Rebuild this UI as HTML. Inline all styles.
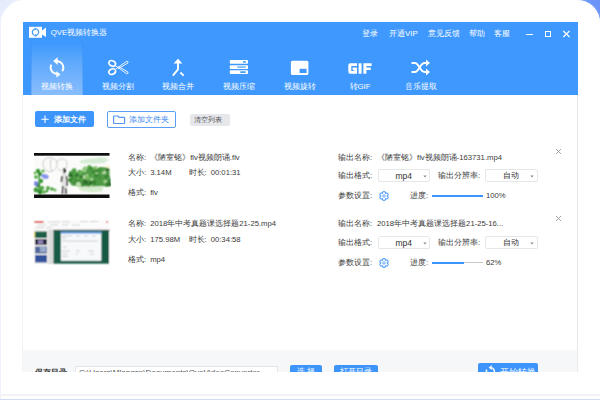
<!DOCTYPE html>
<html><head><meta charset="utf-8">
<style>
*{margin:0;padding:0;box-sizing:border-box}
html,body{width:600px;height:400px;overflow:hidden;background:#fff;font-family:"Liberation Sans",sans-serif}
.a{position:absolute}
#bg{left:0;top:0;width:600px;height:400px;background:radial-gradient(circle at 0 0,#e2e9fb 0px,#ebf0fc 16px,#f6f8fe 30px,#ffffff 60px)}
#blob{left:560px;top:0;width:40px;height:40px;background:#6b94f6}
#card{left:1px;top:0;width:599px;height:395px;background:#fff;border-radius:24px 23px 0 0;box-shadow:0 0 1.5px rgba(255,255,255,1)}
#leftline{left:0;top:20px;width:1px;height:380px;background:#eef2fc}
#botline{left:0;top:394px;width:600px;height:2px;background:#f1f2f4}
#botline2{left:0;top:398.5px;width:600px;height:1.5px;background:#cfdaf4}
#win{left:23px;top:22px;width:555px;height:350px;background:#fff;overflow:hidden}
#rline{left:577px;top:95px;width:1px;height:277px;background:#e8e9ec}
#hdr{left:23px;top:22px;width:555px;height:73px;background:#3e98fe}
#tab{left:31px;top:44px;width:51.5px;height:51px;background:linear-gradient(180deg,#409afd 0%,#5ea9fc 35%,#8abdfc 100%);box-shadow:inset 1px 0 0 rgba(40,120,230,.25),inset -1px 0 0 rgba(40,120,230,.25)}
.t{position:absolute;white-space:nowrap;line-height:1}
.w{color:#fff}
.g{color:#3a3a3a;font-size:7.7px;word-spacing:1.9px}
.lbl{position:absolute;white-space:nowrap;line-height:1;color:#fff;font-size:7.8px;width:60px;text-align:center;top:82.7px}
#footer{left:23px;top:350px;width:554px;height:22px;background:#f6f7f9}
.btn{position:absolute;border-radius:2px}
.sel{position:absolute;border:1px solid #e6e7ea;border-radius:2px;background:#fff;height:12.3px}
.arr{position:absolute;width:4px;height:3px}
</style></head><body>
<div id="bg" class="a"></div>
<div id="blob" class="a"></div>
<div id="card" class="a"></div>
<div id="leftline" class="a"></div>
<div id="botline" class="a"></div>
<div id="botline2" class="a"></div>
<div id="win" class="a"></div>
<div id="hdr" class="a"></div>
<div id="tab" class="a"></div>

<!-- logo -->
<svg class="a" style="left:28px;top:26px" width="20" height="13" viewBox="0 0 20 13">
  <rect x="1" y="0.8" width="13" height="11" fill="#fff"/>
  <polygon points="14,4.5 18,1.5 18,11 14,8.5" fill="#fff"/>
  <path d="M9.10 3.43 A3.2 3.2 0 0 1 8.06 9.35" fill="none" stroke="#4aa0f2" stroke-width="1.3"/><path d="M5.90 8.97 A3.2 3.2 0 0 1 6.94 3.05" fill="none" stroke="#4aa0f2" stroke-width="1.3"/><path d="M5.4 9.6 L8.4 7.9 L8.2 11 Z M9.6 2.8 L6.6 4.5 L6.8 1.4 Z" fill="#4aa0f2"/>
</svg>
<div class="t w" style="left:50.8px;top:28.5px;font-size:7.8px">QVE视频转换器</div>

<div class="t w" style="left:362px;top:30px;font-size:8px">登录</div>
<div class="t w" style="left:389px;top:30px;font-size:8px">开通VIP</div>
<div class="t w" style="left:428px;top:30px;font-size:8px">意见反馈</div>
<div class="t w" style="left:469px;top:30px;font-size:8px">帮助</div>
<div class="t w" style="left:494px;top:30px;font-size:8px">客服</div>
<!-- window controls -->
<div class="a" style="left:526px;top:33.5px;width:7px;height:1.2px;background:#fff"></div>
<div class="a" style="left:544.5px;top:31px;width:6px;height:6px;border:1.1px solid #fff"></div>
<svg class="a" style="left:562px;top:30px" width="9" height="8" viewBox="0 0 9 8"><path d="M1.3 1L7.5 7M7.5 1L1.3 7" stroke="#fff" stroke-width="1.2"/></svg>

<!-- toolbar icons -->
<svg class="a" style="left:40px;top:52px" width="40" height="28" viewBox="0 0 40 28">
  <path d="M17 9.2 A6.3 6.3 0 0 1 22.2 19.1" fill="none" stroke="#fff" stroke-width="1.9"/>
  <path d="M13.2 9.1 L17.6 5.2 L17.6 13 Z" fill="#fff"/>
  <path d="M11.3 12.7 A6.3 6.3 0 0 0 17 21.8" fill="none" stroke="#fff" stroke-width="1.9"/>
  <path d="M20.6 22.4 L16.4 19.2 L16.4 25.4 Z" fill="#fff"/>
</svg>
<svg class="a" style="left:105px;top:57px" width="26" height="21" viewBox="0 0 26 21">
  <ellipse cx="7.2" cy="6.4" rx="3.5" ry="2.6" transform="rotate(25 7.2 6.4)" fill="none" stroke="#fff" stroke-width="1.6"/>
  <ellipse cx="7.2" cy="14.7" rx="3.5" ry="2.6" transform="rotate(-25 7.2 14.7)" fill="none" stroke="#fff" stroke-width="1.6"/>
  <path d="M10.3 12.4 L21.6 4.3 Q23.4 4.1 23 5.9 L13.4 11.6" fill="none" stroke="#fff" stroke-width="0.9" stroke-linejoin="round"/>
  <path d="M10.3 8.6 L21.6 16.7 Q23.4 16.9 23 15.1 L13.4 9.4" fill="none" stroke="#fff" stroke-width="0.9" stroke-linejoin="round"/>
</svg>
<svg class="a" style="left:170px;top:57px" width="16" height="21" viewBox="0 0 16 21">
  <path d="M8 1.8 L12.4 6.5 L3.6 6.5 Z" fill="#fff"/>
  <path d="M8 6 L8 12.3 L2.8 18.6" fill="none" stroke="#fff" stroke-width="1.9"/>
  <path d="M10.4 15.5 L13.7 18.6" fill="none" stroke="#fff" stroke-width="1.9"/>
</svg>
<svg class="a" style="left:228px;top:58px" width="22" height="18" viewBox="0 0 22 18">
  <rect x="1.8" y="2" width="18.2" height="3.8" rx="0.8" fill="#fff"/>
  <rect x="1.8" y="7.2" width="18.2" height="3.8" rx="0.8" fill="#fff"/>
  <rect x="1.8" y="12.2" width="18.2" height="3.8" rx="0.8" fill="#fff"/>
  <rect x="15" y="3" width="3" height="1.8" rx="0.9" fill="#4aa0f0"/>
  <rect x="9" y="8.2" width="9" height="1.8" rx="0.9" fill="#7cbcf4"/>
  <rect x="12" y="13.2" width="6" height="1.8" rx="0.9" fill="#4aa0f0"/>
</svg>
<svg class="a" style="left:289px;top:59px" width="22" height="18" viewBox="0 0 22 18">
  <rect x="1.9" y="1.8" width="17.5" height="14.3" rx="1.5" fill="#fff"/>
  <rect x="10.6" y="9.8" width="7" height="4.2" fill="#3e98fe"/>
</svg>
<svg class="a" style="left:348px;top:63px" width="24" height="11" viewBox="0 0 24 11">
  <path d="M9 0.3 H2.2 Q0.3 0.3 0.3 2.2 V8.8 Q0.3 10.7 2.2 10.7 H9 V4.6 H4.6 V6.9 H5.8 V8.1 H3.3 V2.9 H9 Z" fill="#fff"/>
  <rect x="10.6" y="0.3" width="3" height="10.4" fill="#fff"/>
  <path d="M15.4 0.3 H23.6 V2.9 H18.4 V4.6 H22.8 V7.1 H18.4 V10.7 H15.4 Z" fill="#fff"/>
</svg>
<svg class="a" style="left:410px;top:58px" width="22" height="19" viewBox="0 0 22 19">
  <path d="M1.5 5 L5 5 C9 5 10 14 14.5 14 L17 14" fill="none" stroke="#fff" stroke-width="2"/>
  <path d="M1.5 14 L5 14 C9 14 10 5 14.5 5 L17 5" fill="none" stroke="#fff" stroke-width="2"/>
  <path d="M16 1.5 L20 5 L16 8.5 Z M16 10.5 L20 14 L16 17.5 Z" fill="#fff"/>
</svg>

<div class="lbl" style="left:27px">视频转换</div>
<div class="lbl" style="left:88px">视频分割</div>
<div class="lbl" style="left:148px">视频合并</div>
<div class="lbl" style="left:209px">视频压缩</div>
<div class="lbl" style="left:270px">视频旋转</div>
<div class="lbl" style="left:330px">转GIF</div>
<div class="lbl" style="left:391px">音乐提取</div>

<!-- action buttons -->
<div class="btn" style="left:35px;top:111px;width:59px;height:16.3px;background:#3d95fc"></div>
<svg class="a" style="left:40px;top:114px" width="10" height="10" viewBox="0 0 10 10"><path d="M5 1.6V9M1.3 5.3H8.7" stroke="#fff" stroke-width="1.1"/></svg>
<div class="t w" style="left:54.2px;top:115.8px;font-size:7.6px;font-weight:bold">添加文件</div>

<div class="btn" style="left:107px;top:111px;width:69.2px;height:16.6px;border:1px solid #5b9ef6;background:#fff"></div>
<svg class="a" style="left:112px;top:114px" width="14" height="11" viewBox="0 0 14 11">
  <path d="M2 2 H5.8 L7.2 3.4 H12.2 Q12.6 3.4 12.6 3.8 V9.1 Q12.6 9.5 12.2 9.5 H2 Q1.6 9.5 1.6 9.1 V2.4 Q1.6 2 2 2 Z" fill="none" stroke="#5498f4" stroke-width="1.2" stroke-linejoin="round"/>
</svg>
<div class="t" style="left:129.2px;top:115.8px;font-size:7.6px;color:#3b88f0">添加文件夹</div>

<div class="btn" style="left:190px;top:114px;width:39.5px;height:12.4px;background:#e6e7eb"></div>
<div class="t" style="left:194.3px;top:116.4px;font-size:7.4px;color:#555">清空列表</div>

<!-- row 1 -->
<svg class="a" style="left:33px;top:152px" width="78" height="48" viewBox="33 152 78 48">
  <defs><filter id="bl" x="-10%" y="-10%" width="120%" height="120%"><feConvolveMatrix order="3" kernelMatrix="1 2 1 2 4 2 1 2 1" divisor="16" edgeMode="none"/></filter></defs>
  <rect x="34" y="155.7" width="75.5" height="38.8" fill="#fbfcfa"/>
  <g filter="url(#bl)">
    <path d="M44 160 C48 156 56 157 57 163 C58 169 52 173 47 171 C43 169 42 164 44 160 Z M51 159 C50 163 50 168 52 171" fill="none" stroke="#c8c8c8" stroke-width="1"/>
    <path d="M57 162 C60 157 67 158 67 164 C67 170 61 172 58 169" fill="none" stroke="#cccccc" stroke-width="1"/>
    <path d="M80 161 C86 158 94 159 98 157.5 C103 156.5 107 158 108.5 160 L104 163 C96 163.5 88 164 80 163 Z" fill="#d6ecd4"/>
    <path d="M102 167 L109.5 165.5 L109.5 171 Z" fill="#f6efc8"/>
    <path d="M39 170 C40 176 38 182 40 194.5" fill="none" stroke="#2f8a2c" stroke-width="1.4"/>
    <circle cx="38" cy="171" r="2.2" fill="#3f9a38"/>
    <circle cx="40" cy="174" r="2" fill="#2f8a2c"/>
    <circle cx="36" cy="177" r="1.8" fill="#4aa83e"/>
    <circle cx="41" cy="181" r="2.2" fill="#3f9a38"/>
    <circle cx="38" cy="185" r="2.4" fill="#3c8a36"/>
    <circle cx="42" cy="188" r="2.2" fill="#55aa45"/>
    <circle cx="36" cy="190" r="2.4" fill="#3f9a38"/>
    <circle cx="40" cy="192" r="2.4" fill="#2f8a2c"/>
    <circle cx="44" cy="192" r="1.8" fill="#4aa83e"/>
    <circle cx="35" cy="173" r="1.5" fill="#6abf50"/>
    <circle cx="43" cy="171" r="1.6" fill="#58b048"/>
    <circle cx="48" cy="188" r="2" fill="#5aa84a"/>
    <circle cx="52" cy="189" r="1.8" fill="#4e9e40"/>
    <circle cx="55" cy="190" r="1.5" fill="#6ab558"/>
    <circle cx="47" cy="191" r="1.4" fill="#3f9a38"/>
    <ellipse cx="45" cy="176.5" rx="3.8" ry="2.2" transform="rotate(15 45 176.5)" fill="#8896ea"/>
    <ellipse cx="36" cy="183.5" rx="2" ry="2.6" fill="#7282e0"/>
    <path d="M63 170 C65 168.5 66 170.5 65.5 172.5 L67 178 C66 182 67 188 66.5 194.5 L61.5 194.5 C62 188 61 182 62 177 Z" fill="#e4e4e4"/>
    <path d="M64 169 C65.8 169 65.6 171.6 64.4 172.5 Z M62.2 176 L61.4 182 M66.5 176 L67 186 M62.8 186 L62.4 194 M65.6 188 L66 194" fill="none" stroke="#222" stroke-width="1.4"/>
    <path d="M70 182 C71 175 76 171 82 171 C86 168 92 168 96 169 C100 166 105 167 109.5 169 L109.5 186 C102 187 94 186.5 88 186 C82 187 76 186.5 71 185 Z" fill="#4f9a45"/>
    <circle cx="87.9" cy="177.6" r="2.5" fill="#4f9a45"/>
    <circle cx="103.8" cy="172.0" r="2.3" fill="#b8dca8"/>
    <circle cx="101.3" cy="169.8" r="1.6" fill="#3c8a36"/>
    <circle cx="93.5" cy="174.1" r="1.8" fill="#78ba62"/>
    <circle cx="94.6" cy="182.7" r="1.3" fill="#347c30"/>
    <circle cx="93.7" cy="181.6" r="1.7" fill="#347c30"/>
    <circle cx="90.5" cy="178.9" r="1.9" fill="#4f9e44"/>
    <circle cx="95.9" cy="174.7" r="2.0" fill="#5aa84c"/>
    <circle cx="98.0" cy="173.2" r="1.5" fill="#3c8a36"/>
    <circle cx="92.2" cy="168.2" r="1.4" fill="#5aa84c"/>
    <circle cx="107.8" cy="183.5" r="1.2" fill="#3c8a36"/>
    <circle cx="88.6" cy="185.6" r="1.8" fill="#347c30"/>
    <circle cx="100.8" cy="172.8" r="1.3" fill="#4f9e44"/>
    <circle cx="99.9" cy="170.0" r="1.5" fill="#3c8a36"/>
    <circle cx="88.4" cy="176.2" r="2.2" fill="#4f9a45"/>
    <circle cx="77.5" cy="181.5" r="1.4" fill="#3c8a36"/>
    <circle cx="85.6" cy="185.8" r="1.2" fill="#4f9a45"/>
    <circle cx="82.0" cy="184.0" r="1.5" fill="#4f9a45"/>
    <circle cx="95.4" cy="168.7" r="2.6" fill="#98cc84"/>
    <circle cx="70.4" cy="180.1" r="2.4" fill="#3c8a36"/>
    <circle cx="73.6" cy="179.4" r="1.5" fill="#98cc84"/>
    <circle cx="94.6" cy="169.1" r="2.0" fill="#78ba62"/>
    <circle cx="104.2" cy="171.9" r="1.4" fill="#b8dca8"/>
    <circle cx="79.9" cy="172.0" r="2.2" fill="#78ba62"/>
    <circle cx="97.1" cy="174.5" r="1.9" fill="#3c8a36"/>
    <circle cx="74.1" cy="170.7" r="2.5" fill="#4f9e44"/>
    <circle cx="80.2" cy="182.9" r="2.0" fill="#347c30"/>
    <circle cx="106.7" cy="185.6" r="1.4" fill="#4f9a45"/>
    <circle cx="94.3" cy="172.0" r="2.5" fill="#3c8a36"/>
    <circle cx="72.7" cy="176.8" r="1.5" fill="#3d8c34"/>
    <circle cx="84.6" cy="178.2" r="1.4" fill="#2c6e2a"/>
    <circle cx="108.7" cy="180.4" r="2.2" fill="#347c30"/>
    <circle cx="93.3" cy="184.5" r="1.9" fill="#3d8c34"/>
    <circle cx="108.0" cy="170.0" r="2.1" fill="#98cc84"/>
    <circle cx="82.6" cy="186.0" r="1.3" fill="#3c8a36"/>
    <circle cx="105.6" cy="181.6" r="2.2" fill="#98cc84"/>
    <circle cx="83.9" cy="180.3" r="2.5" fill="#4f9e44"/>
    <circle cx="107.3" cy="170.0" r="1.9" fill="#2c6e2a"/>
    <circle cx="85.0" cy="167.8" r="1.3" fill="#5aa84c"/>
    <circle cx="109.2" cy="184.1" r="2.2" fill="#4f9a45"/>
    <circle cx="88.1" cy="175.7" r="2.0" fill="#b8dca8"/>
    <circle cx="71.2" cy="179.9" r="1.9" fill="#3c8a36"/>
    <circle cx="89.6" cy="178.5" r="2.5" fill="#3c8a36"/>
    <circle cx="84.5" cy="170.3" r="2.1" fill="#98cc84"/>
    <circle cx="96.1" cy="175.4" r="2.4" fill="#3d8c34"/>
    <circle cx="77.8" cy="176.4" r="2.3" fill="#78ba62"/>
    <circle cx="85.2" cy="178.3" r="1.6" fill="#2c6e2a"/>
    <circle cx="83.9" cy="184.1" r="1.3" fill="#3d8c34"/>
    <circle cx="102.5" cy="170.4" r="1.9" fill="#4f9e44"/>
    <circle cx="85.1" cy="177.2" r="2.1" fill="#b8dca8"/>
    <circle cx="87.9" cy="168.4" r="1.2" fill="#5aa84c"/>
    <circle cx="96.8" cy="172.4" r="1.7" fill="#b8dca8"/>
    <circle cx="70.8" cy="172.9" r="1.8" fill="#3d8c34"/>
    <circle cx="79.4" cy="171.3" r="1.3" fill="#4f9e44"/>
    <circle cx="74.3" cy="178.6" r="2.1" fill="#3c8a36"/>
    <circle cx="97.0" cy="170.9" r="1.9" fill="#3c8a36"/>
    <circle cx="99.8" cy="177.5" r="1.3" fill="#3d8c34"/>
    <circle cx="91.3" cy="184.9" r="1.9" fill="#78ba62"/>
    <circle cx="85.5" cy="182.1" r="2.5" fill="#2c6e2a"/>
    <circle cx="75.1" cy="177.2" r="2.1" fill="#4f9e44"/>
    <circle cx="91.7" cy="179.1" r="1.9" fill="#98cc84"/>
    <circle cx="88.3" cy="179.3" r="1.5" fill="#5aa84c"/>
    <circle cx="78.4" cy="184.3" r="2.6" fill="#b8dca8"/>
    <circle cx="108.6" cy="184.9" r="1.6" fill="#3c8a36"/>
    <circle cx="83.8" cy="169.4" r="1.8" fill="#98cc84"/>
    <circle cx="89.3" cy="167.2" r="2.3" fill="#5aa84c"/>
    <circle cx="76.8" cy="175.0" r="2.3" fill="#347c30"/>
    <circle cx="109.5" cy="184.4" r="1.9" fill="#2c6e2a"/>
    <circle cx="107.4" cy="177.6" r="2.5" fill="#347c30"/>
    <circle cx="87.4" cy="177.6" r="2.4" fill="#78ba62"/>
    <circle cx="90.6" cy="182.9" r="2.0" fill="#2c6e2a"/>
    <circle cx="107.7" cy="183.9" r="2.1" fill="#347c30"/>
    <circle cx="108.3" cy="178.2" r="2.0" fill="#4f9a45"/>
    <circle cx="74.5" cy="170.1" r="1.7" fill="#5aa84c"/>
    <circle cx="90.4" cy="174.2" r="2.3" fill="#4f9e44"/>
    <circle cx="73.7" cy="172.8" r="2.5" fill="#4f9e44"/>
    <circle cx="80.6" cy="176.8" r="1.4" fill="#2c6e2a"/>
    <circle cx="90.7" cy="168.4" r="1.8" fill="#3d8c34"/>
    <circle cx="75.1" cy="182.4" r="1.2" fill="#347c30"/>
    <circle cx="70.5" cy="175.2" r="2.2" fill="#2c6e2a"/>
    <path d="M78 187 C86 186 94 187 104 186 L102 191.5 C94 192.5 86 192.5 80 190.5 Z" fill="#d8eccf"/>
  </g>
  <rect x="34" y="153" width="75.5" height="2.7" fill="#0e0e0e"/>
  <rect x="34" y="194.5" width="75.5" height="3.5" fill="#0e0e0e"/>
</svg>
<div class="t g" style="left:128px;top:154px">名称: 《陋室铭》flv视频朗诵.flv</div>
<div class="t g" style="left:128px;top:169px">大小: 3.14M</div>
<div class="t g" style="left:188.5px;top:169px">时长: 00:01:31</div>
<div class="t g" style="left:128px;top:189px">格式: flv</div>

<div class="t g" style="left:338px;top:154px">输出名称: </div>
<div class="t g" style="left:377px;top:154px">《陋室铭》flv视频朗诵-163731.mp4</div>
<div class="t g" style="left:338px;top:172px">输出格式: </div>
<div class="sel" style="left:377.5px;top:169.4px;width:52.6px"></div>
<div class="t" style="left:395.5px;top:172.0px;font-size:8.5px;color:#333">mp4</div>
<svg class="arr" style="left:422.8px;top:175.2px" viewBox="0 0 4 3"><path d="M0.3 0.4 H3.7 L2 2.4 Z" fill="#8a8a8a"/></svg>
<div class="t g" style="left:438px;top:172px">输出分辨率: </div>
<div class="sel" style="left:484.5px;top:169.4px;width:53px"></div>
<div class="t" style="left:503px;top:172px;font-size:8px;color:#333">自动</div>
<svg class="arr" style="left:530px;top:175.2px" viewBox="0 0 4 3"><path d="M0.3 0.4 H3.7 L2 2.4 Z" fill="#8a8a8a"/></svg>
<div class="t g" style="left:338px;top:192px">参数设置: </div>
<svg class="a" style="left:378.6px;top:190.6px" width="10" height="10" viewBox="0 0 10 10"><path d="M8.06 5.00 L8.35 5.15 L8.56 5.31 L8.73 5.49 L8.86 5.68 L8.95 5.88 L9.02 6.08 L9.05 6.28 L9.06 6.48 L9.04 6.68 L9.00 6.87 L8.94 7.05 L8.85 7.22 L8.75 7.39 L8.62 7.53 L8.47 7.67 L8.31 7.78 L8.13 7.87 L7.94 7.94 L7.73 7.98 L7.52 8.00 L7.29 7.98 L7.05 7.93 L6.80 7.83 L6.53 7.65 L6.55 7.97 L6.51 8.24 L6.44 8.48 L6.34 8.68 L6.22 8.86 L6.08 9.02 L5.92 9.15 L5.75 9.26 L5.57 9.34 L5.39 9.40 L5.19 9.44 L5.00 9.45 L4.81 9.44 L4.61 9.40 L4.43 9.34 L4.25 9.26 L4.08 9.15 L3.92 9.02 L3.78 8.86 L3.66 8.68 L3.56 8.48 L3.49 8.24 L3.45 7.97 L3.47 7.65 L3.20 7.83 L2.95 7.93 L2.71 7.98 L2.48 8.00 L2.27 7.98 L2.06 7.94 L1.87 7.87 L1.69 7.78 L1.53 7.67 L1.38 7.53 L1.25 7.39 L1.15 7.23 L1.06 7.05 L1.00 6.87 L0.96 6.68 L0.94 6.48 L0.95 6.28 L0.98 6.08 L1.05 5.88 L1.14 5.68 L1.27 5.49 L1.44 5.31 L1.65 5.15 L1.94 5.00 L1.65 4.85 L1.44 4.69 L1.27 4.51 L1.14 4.32 L1.05 4.12 L0.98 3.92 L0.95 3.72 L0.94 3.52 L0.96 3.32 L1.00 3.13 L1.06 2.95 L1.15 2.77 L1.25 2.61 L1.38 2.47 L1.53 2.33 L1.69 2.22 L1.87 2.13 L2.06 2.06 L2.27 2.02 L2.48 2.00 L2.71 2.02 L2.95 2.07 L3.20 2.17 L3.47 2.35 L3.45 2.03 L3.49 1.76 L3.56 1.52 L3.66 1.32 L3.78 1.14 L3.92 0.98 L4.08 0.85 L4.25 0.74 L4.43 0.66 L4.61 0.60 L4.81 0.56 L5.00 0.55 L5.19 0.56 L5.39 0.60 L5.57 0.66 L5.75 0.74 L5.92 0.85 L6.08 0.98 L6.22 1.14 L6.34 1.32 L6.44 1.52 L6.51 1.76 L6.55 2.03 L6.53 2.35 L6.80 2.17 L7.05 2.07 L7.29 2.02 L7.52 2.00 L7.73 2.02 L7.94 2.06 L8.13 2.13 L8.31 2.22 L8.47 2.33 L8.62 2.47 L8.75 2.61 L8.85 2.78 L8.94 2.95 L9.00 3.13 L9.04 3.32 L9.06 3.52 L9.05 3.72 L9.02 3.92 L8.95 4.12 L8.86 4.32 L8.73 4.51 L8.56 4.69 L8.35 4.85 L8.06 5.00Z" fill="none" stroke="#58a0f8" stroke-width="1.15" stroke-linejoin="round"/><circle cx="5" cy="5" r="1.2" fill="none" stroke="#5aa2f8" stroke-width="0.9"/></svg>
<div class="t g" style="left:410px;top:192px">进度: </div>
<div class="a" style="left:432px;top:195px;width:51px;height:1.5px;background:#3d95fc"></div>
<div class="t g" style="left:486px;top:192px">100%</div>
<svg class="a" style="left:555px;top:148px" width="7" height="7" viewBox="0 0 7 7"><path d="M1 1L6 6M6 1L1 6" stroke="#999" stroke-width="0.9"/></svg>

<!-- row 2 -->
<svg class="a" style="left:33px;top:219px" width="78" height="47" viewBox="33 219 78 47">
  <defs><filter id="bl2" x="-10%" y="-10%" width="120%" height="120%"><feConvolveMatrix order="3" kernelMatrix="1 2 1 2 4 2 1 2 1" divisor="16" edgeMode="none"/></filter></defs>
  <g filter="url(#bl2)">
  <rect x="34" y="220" width="76" height="44" fill="#f7f7f7"/>
  <rect x="34" y="220" width="76" height="9.5" fill="#fbfbfb"/>
  <rect x="34.5" y="221" width="9" height="2" fill="#e25a50"/>
  <path d="M48 222 H60 M62 222 H70 M38 225 H46 M50 225 H58 M62 225 H68 M72 225 H80 M36 227.5 H44 M46 227.5 H52 M80 221.5 H88 M90 221.5 H98" stroke="#c8c8c8" stroke-width="0.8"/>
  <rect x="106" y="221" width="2" height="2" fill="#e88"/>
  <rect x="34" y="229.5" width="14" height="34.5" fill="#f3f3f3"/>
  <rect x="48" y="229.5" width="5.5" height="34.5" fill="#dcdcdc"/>
  <rect x="35" y="231.5" width="12" height="6.5" fill="#1c6048"/>
  <rect x="34.3" y="231.5" width="0.9" height="6.5" fill="#e8c84a"/>
  <rect x="35" y="239" width="12" height="5.8" fill="#2c2a40"/>
  <rect x="38" y="240" width="5" height="4" fill="#8a82b0"/>
  <rect x="35" y="246.5" width="12" height="7" fill="#52699a"/>
  <rect x="40" y="247" width="6" height="5" fill="#9aaacb"/>
  <rect x="35" y="255" width="12" height="7.5" fill="#34539c"/>
  <rect x="53.5" y="229.8" width="56" height="1" fill="#333"/>
  <rect x="53.5" y="230.5" width="55.5" height="33.2" fill="#165a45"/>
  <rect x="60.8" y="231.6" width="40.6" height="29.2" fill="#f8f9fb"/>
  <rect x="60.8" y="231.6" width="40.6" height="1.8" fill="#3a86d8"/>
  <path d="M62 236 H72 M62 238 H66 M76 236 H80 M84 236 H88 M92 236 H96 M62 241 H98 M63 247 H67 M62 251 H70 M76 251 H80 M88 251 H94 M62 254 H68 M62 256.5 H68 M76 254 H78 M90 254 H94" stroke="#b8bcc4" stroke-width="0.7"/>
  </g>
</svg>
<div class="t g" style="left:128px;top:220px">名称: 2018年中考真题课选择题21-25.mp4</div>
<div class="t g" style="left:128px;top:236px">大小: 175.98M</div>
<div class="t g" style="left:188.5px;top:236px">时长: 00:34:58</div>
<div class="t g" style="left:128px;top:256px">格式: mp4</div>

<div class="t g" style="left:338px;top:220px">输出名称: </div>
<div class="t g" style="left:377px;top:220px">2018年中考真题课选择题21-25-16...</div>
<div class="t g" style="left:338px;top:239px">输出格式: </div>
<div class="sel" style="left:377.5px;top:236.4px;width:52.6px"></div>
<div class="t" style="left:395.5px;top:239.0px;font-size:8.5px;color:#333">mp4</div>
<svg class="arr" style="left:422.8px;top:242.2px" viewBox="0 0 4 3"><path d="M0.3 0.4 H3.7 L2 2.4 Z" fill="#8a8a8a"/></svg>
<div class="t g" style="left:438px;top:239px">输出分辨率: </div>
<div class="sel" style="left:484.5px;top:236.4px;width:53px"></div>
<div class="t" style="left:503px;top:239px;font-size:8px;color:#333">自动</div>
<svg class="arr" style="left:530px;top:242.2px" viewBox="0 0 4 3"><path d="M0.3 0.4 H3.7 L2 2.4 Z" fill="#8a8a8a"/></svg>
<div class="t g" style="left:338px;top:259px">参数设置: </div>
<svg class="a" style="left:378.6px;top:257.6px" width="10" height="10" viewBox="0 0 10 10"><path d="M8.06 5.00 L8.35 5.15 L8.56 5.31 L8.73 5.49 L8.86 5.68 L8.95 5.88 L9.02 6.08 L9.05 6.28 L9.06 6.48 L9.04 6.68 L9.00 6.87 L8.94 7.05 L8.85 7.22 L8.75 7.39 L8.62 7.53 L8.47 7.67 L8.31 7.78 L8.13 7.87 L7.94 7.94 L7.73 7.98 L7.52 8.00 L7.29 7.98 L7.05 7.93 L6.80 7.83 L6.53 7.65 L6.55 7.97 L6.51 8.24 L6.44 8.48 L6.34 8.68 L6.22 8.86 L6.08 9.02 L5.92 9.15 L5.75 9.26 L5.57 9.34 L5.39 9.40 L5.19 9.44 L5.00 9.45 L4.81 9.44 L4.61 9.40 L4.43 9.34 L4.25 9.26 L4.08 9.15 L3.92 9.02 L3.78 8.86 L3.66 8.68 L3.56 8.48 L3.49 8.24 L3.45 7.97 L3.47 7.65 L3.20 7.83 L2.95 7.93 L2.71 7.98 L2.48 8.00 L2.27 7.98 L2.06 7.94 L1.87 7.87 L1.69 7.78 L1.53 7.67 L1.38 7.53 L1.25 7.39 L1.15 7.23 L1.06 7.05 L1.00 6.87 L0.96 6.68 L0.94 6.48 L0.95 6.28 L0.98 6.08 L1.05 5.88 L1.14 5.68 L1.27 5.49 L1.44 5.31 L1.65 5.15 L1.94 5.00 L1.65 4.85 L1.44 4.69 L1.27 4.51 L1.14 4.32 L1.05 4.12 L0.98 3.92 L0.95 3.72 L0.94 3.52 L0.96 3.32 L1.00 3.13 L1.06 2.95 L1.15 2.77 L1.25 2.61 L1.38 2.47 L1.53 2.33 L1.69 2.22 L1.87 2.13 L2.06 2.06 L2.27 2.02 L2.48 2.00 L2.71 2.02 L2.95 2.07 L3.20 2.17 L3.47 2.35 L3.45 2.03 L3.49 1.76 L3.56 1.52 L3.66 1.32 L3.78 1.14 L3.92 0.98 L4.08 0.85 L4.25 0.74 L4.43 0.66 L4.61 0.60 L4.81 0.56 L5.00 0.55 L5.19 0.56 L5.39 0.60 L5.57 0.66 L5.75 0.74 L5.92 0.85 L6.08 0.98 L6.22 1.14 L6.34 1.32 L6.44 1.52 L6.51 1.76 L6.55 2.03 L6.53 2.35 L6.80 2.17 L7.05 2.07 L7.29 2.02 L7.52 2.00 L7.73 2.02 L7.94 2.06 L8.13 2.13 L8.31 2.22 L8.47 2.33 L8.62 2.47 L8.75 2.61 L8.85 2.78 L8.94 2.95 L9.00 3.13 L9.04 3.32 L9.06 3.52 L9.05 3.72 L9.02 3.92 L8.95 4.12 L8.86 4.32 L8.73 4.51 L8.56 4.69 L8.35 4.85 L8.06 5.00Z" fill="none" stroke="#58a0f8" stroke-width="1.15" stroke-linejoin="round"/><circle cx="5" cy="5" r="1.2" fill="none" stroke="#5aa2f8" stroke-width="0.9"/></svg>
<div class="t g" style="left:410px;top:259px">进度: </div>
<div class="a" style="left:432px;top:262px;width:51px;height:1px;background:#c8c8c8"></div>
<div class="a" style="left:432px;top:262px;width:32px;height:1.5px;background:#3d95fc"></div>
<div class="t g" style="left:486px;top:259px">62%</div>
<svg class="a" style="left:555px;top:215px" width="7" height="7" viewBox="0 0 7 7"><path d="M1 1L6 6M6 1L1 6" stroke="#999" stroke-width="0.9"/></svg>

<div id="rline" class="a"></div>
<div class="a" style="left:22px;top:95px;width:1px;height:277px;background:#f3f3f4"></div>

<!-- footer -->
<div id="footer" class="a"></div>
<div class="t" style="left:35.3px;top:368.8px;font-size:7.7px;color:#333;font-weight:bold">保存目录</div>
<div class="a" style="left:75px;top:365.8px;width:202.5px;height:14px;background:#fff;border:1px solid #e3e5ea"></div>
<div class="t" style="left:79px;top:368.6px;font-size:8.1px;color:#555">C:\Users\Mlangsp\Documents\QveVideoConverter</div>
<div class="btn" style="left:290px;top:365px;width:32px;height:14px;background:#3d95fc"></div>
<div class="t w" style="left:297px;top:368px;font-size:8px">选 择</div>
<div class="btn" style="left:334px;top:365px;width:44px;height:14px;background:#3d95fc"></div>
<div class="t w" style="left:340px;top:368px;font-size:8px">打开目录</div>
<div class="btn" style="left:478px;top:363px;width:60px;height:16px;background:#3d95fc"></div>
<div class="t w" style="left:500px;top:367.5px;font-size:8.8px">开始转换</div>
<svg class="a" style="left:484px;top:364px" width="14" height="12" viewBox="0 0 14 12"><path d="M7.5 3.6 A4 4 0 1 1 2.8 5.6" fill="none" stroke="#fff" stroke-width="1.5"/><path d="M4.6 3.6 L7.8 1.3 L7.8 5.9 Z" fill="#fff"/></svg>

<!-- bottom white overlay -->
<div class="a" style="left:1px;top:372px;width:599px;height:22px;background:#fff"></div>
</body></html>
